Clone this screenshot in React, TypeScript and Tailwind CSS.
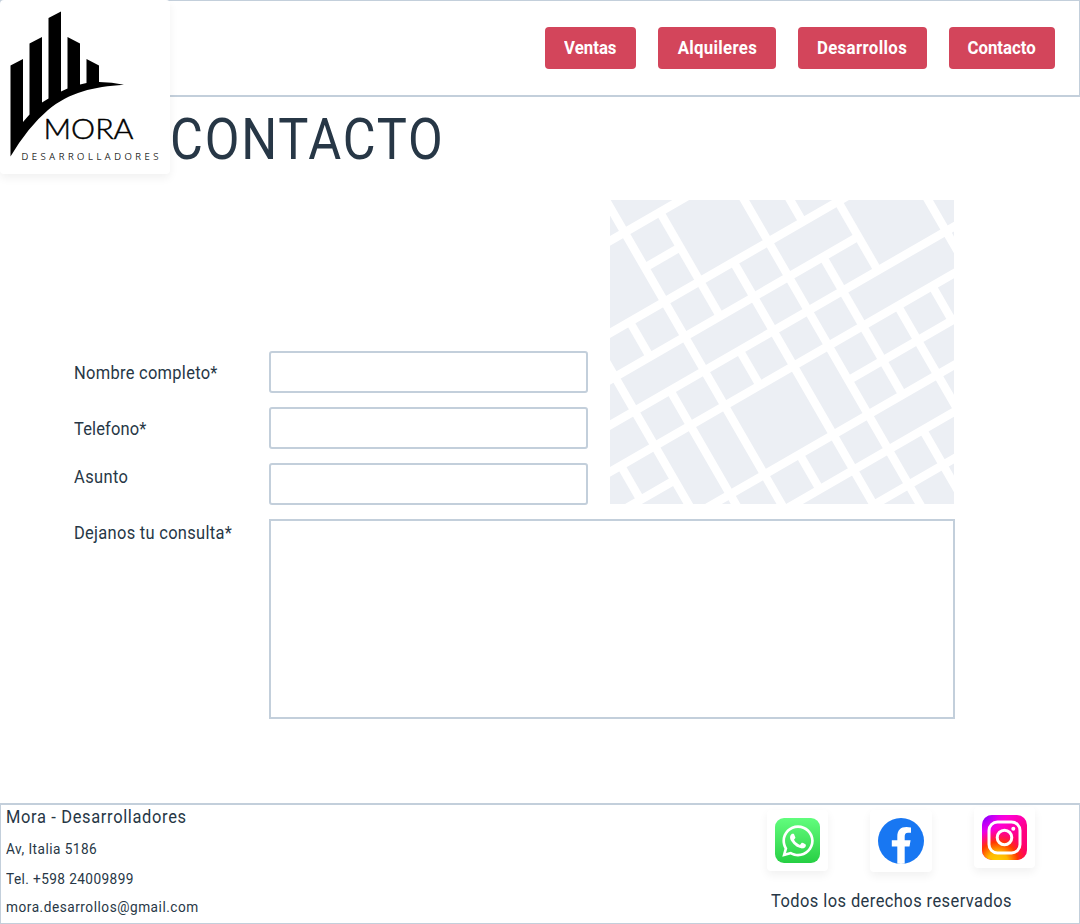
import { FaWhatsapp } from "react-icons/fa6";

// Street centre lines in a frame turned by -30 degrees: [offset, from, to]
const avenues: number[][] = [
  [35.4, -200, 400], [76, -3.6, 37.2], [115.3, -200, 400], [155.8, -200, 196.5],
  [195, -200, 400], [235.5, -200, 400], [275, -200, -84.2], [275.3, 116.3, 400],
  [315, -200, 400], [355.5, -200, 400], [396, 76, 400],
];
const streets: number[][] = [
  [-3.6, -50, 500], [37.2, 35.4, 155.8], [-84.2, -50, 500], [-43.8, 115.3, 155.8],
  [116.3, -50, 500], [76, 115.3, 500], [196.7, 115.3, 195], [156, -50, 115.3],
  [156, 155.8, 315], [275.5, -50, 500], [37, 195, 235.5], [-43.2, 195, 500],
  [-123.5, 235.5, 275], [196.3, 235.5, 500], [236, 235.5, 275.3], [37, 315, 355.5],
  [156, 355.5, 500],
];

function StreetMap() {
  return (
    <svg className="block h-[304px] w-[344px] bg-[#eceff4]" viewBox="0 0 344 304">
      <g transform="rotate(-30)" stroke="#fff" strokeWidth="8.4">
        {avenues.map(([v, a, b], i) => <line key={i} x1={a} x2={b} y1={v} y2={v} />)}
        {streets.map(([u, a, b], i) => <line key={i} x1={u} x2={u} y1={a} y2={b} />)}
      </g>
    </svg>
  );
}

function Logo() {
  return (
    <svg className="block h-[174px] w-[170px]" viewBox="0 0 170 174">
      <path d="M10.5 65.5 23 59V122L29.5 114.5V43.5L42 37V102.5L48.5 98.5V18L61 11.5V91.5L67.5 88.5V37L80 43.5V84.5L86.5 83V59L99 65.5V82Q112 82 124 84.8C93 87 70 92 48 110Q28 127 10.5 156.5Z" />
      <text x="43.5" y="138.500" textLength="90" lengthAdjust="spacingAndGlyphs" stroke="#000" strokeWidth=".45" className="font-[Lato] text-[27px] font-light">MORA</text>
      <text x="21.5" y="159.800" textLength="137" stroke="#000" strokeWidth=".15" className="font-[Open_Sans] text-[9.5px] font-light">DESARROLLADORES</text>
    </svg>
  );
}

function Facebook() {
  return (
    <svg className="block size-[46px]" viewBox="0 0 46 46">
      <defs><clipPath id="fb-disc"><circle cx="23" cy="23" r="23" /></clipPath></defs>
      <g clipPath="url(#fb-disc)">
        <rect width="46" height="46" fill="#1877f2" />
        <path fill="#fff" d="M19.300 46V28.600H13.800V22.300H19.300V19C19.300 12 22.500 9 28.500 9Q31 9 33 9.400V14.700H30C27.500 14.700 26.700 16 26.700 18.700V22.300H32.600L31.500 28.600H26.700V46Z" />
      </g>
    </svg>
  );
}

function Instagram() {
  return (
    <svg className="block size-[45px]" viewBox="0 0 45 45">
      <defs>
        <linearGradient id="ig-base" x1="0" y1="0" x2="1" y2="1">
          <stop offset="0" stopColor="#c000ff" /><stop offset=".3" stopColor="#ff00d8" /><stop offset=".65" stopColor="#ff0080" /><stop offset="1" stopColor="#ff0069" />
        </linearGradient>
        <radialGradient id="ig-warm" cx=".35" cy="1.05" r=".75">
          <stop offset="0" stopColor="#ffd000" /><stop offset=".3" stopColor="#ffb800" /><stop offset=".6" stopColor="#ff3800" /><stop offset="1" stopColor="#ff0050" stopOpacity="0" />
        </radialGradient>
        <radialGradient id="ig-cool" cx="0" cy="0" r=".45">
          <stop offset="0" stopColor="#6a00ff" /><stop offset="1" stopColor="#e000ff" stopOpacity="0" />
        </radialGradient>
      </defs>
      <rect width="45" height="45" rx="10" fill="url(#ig-base)" />
      <rect width="45" height="45" rx="10" fill="url(#ig-warm)" />
      <rect width="45" height="45" rx="10" fill="url(#ig-cool)" />
      <g fill="none" stroke="#fff" strokeWidth="3">
        <rect x="7" y="7" width="31" height="31" rx="8.5" />
        <circle cx="22.5" cy="22.5" r="7.300" />
      </g>
      <circle cx="31.300" cy="13.800" r="2" fill="#fff" />
    </svg>
  );
}

const field = "h-[42px] w-[319px] rounded-[3px] border-2 border-[#c3cfdb] bg-white outline-none";
const navButton = "flex h-[42px] items-center justify-center rounded-[4px] bg-[#d3455b] text-[17.5px] font-bold text-white";
const tile = "rounded-[4px] bg-white shadow-[0_4px_10px_rgba(0,0,0,0.06)]";
const narrow = "inline-block origin-left scale-x-94 whitespace-nowrap ";
const navText = "inline-block scale-x-96 ";

export default function App() {
  return (
    <div className="flex h-[924px] w-[1080px] flex-col bg-white font-[Roboto,sans-serif] text-[17.5px] text-[#273746]">
      <header className="relative h-[97px] shrink-0 border border-b-2 border-[#c3cfdb]">
        <div className={"absolute -top-px -left-px h-[174px] w-[170px] " + tile}><Logo /></div>
        <nav className="flex justify-end gap-[22px] pt-[26px] pr-6">
          <button className={"w-[91px] " + navButton}><span className={navText}>Ventas</span></button>
          <button className={"w-[118px] " + navButton}><span className={navText + "tracking-[0.33px]"}>Alquileres</span></button>
          <button className={"w-[129px] " + navButton}><span className={navText + "tracking-[0.39px]"}>Desarrollos</span></button>
          <button className={"w-[106px] " + navButton}><span className={navText}>Contacto</span></button>
        </nav>
      </header>
      <main className="flex grow flex-col">
        <h1 className="h-[103px] pt-[10px] pl-[170px] text-[58px] leading-[64px]">
          <span className="inline-block origin-left scale-x-87 tracking-[2.1px]">CONTACTO</span>
        </h1>
        <div className="flex pl-[74px]">
          <div className="flex w-[536px] flex-col gap-[14px] pt-[151px]">
            <label className="flex">
              <span className="w-[195px] pt-[8px] leading-7"><span className={narrow + "tracking-[0.31px]"}>Nombre completo*</span></span>
              <input className={field} />
            </label>
            <label className="flex">
              <span className="w-[195px] pt-[8px] leading-7"><span className={narrow + "tracking-[0.17px]"}>Telefono*</span></span>
              <input className={field} />
            </label>
            <label className="flex">
              <span className="w-[195px] leading-7"><span className={narrow + "tracking-[0.42px]"}>Asunto</span></span>
              <input className={field} />
            </label>
          </div>
          <StreetMap />
        </div>
        <label className="flex pt-[14px] pl-[74px]">
          <span className="w-[195px] leading-7"><span className={narrow + "tracking-[0.32px]"}>Dejanos tu consulta*</span></span>
          <textarea className="block h-[200px] w-[686px] resize-none border-2 border-[#c3cfdb] bg-white outline-none" />
        </label>
      </main>
      <footer className="flex h-[121px] shrink-0 justify-between border border-t-2 border-[#c3cfdb]">
        <div className="flex flex-col pl-[5px] text-[14.5px]">
          <p className="h-[31px] text-[17.5px] leading-6"><span className={narrow + "tracking-[0.7px]"}>Mora - Desarrolladores</span></p>
          <p className="h-[30px] leading-7"><span className={narrow + "tracking-[0.5px]"}>Av, Italia 5186</span></p>
          <p className="h-[28px] leading-7"><span className={narrow + "tracking-[0.44px]"}>Tel. +598 24009899</span></p>
          <p className="h-[28px] leading-7"><span className={narrow + "tracking-[0.56px]"}>mora.desarrollos@gmail.com</span></p>
        </div>
        <div className="flex w-[312px] flex-col">
          <div className="flex h-[82px] items-start">
            <div className={"mt-[5px] mr-[42px] p-2 " + tile}>
              <div className="flex size-[45px] items-center justify-center rounded-[9px] bg-linear-to-b from-[#61fd7d] to-[#25cf43]"><FaWhatsapp className="size-[36px] text-white" /></div>
            </div>
            <div className={"mt-[5px] mr-[42px] p-2 " + tile}><Facebook /></div>
            <div className={"mt-[2px] p-2 " + tile}><Instagram /></div>
          </div>
          <p className="pl-[4px] leading-7"><span className={narrow + "tracking-[0.46px]"}>Todos los derechos reservados</span></p>
        </div>
      </footer>
    </div>
  );
}
